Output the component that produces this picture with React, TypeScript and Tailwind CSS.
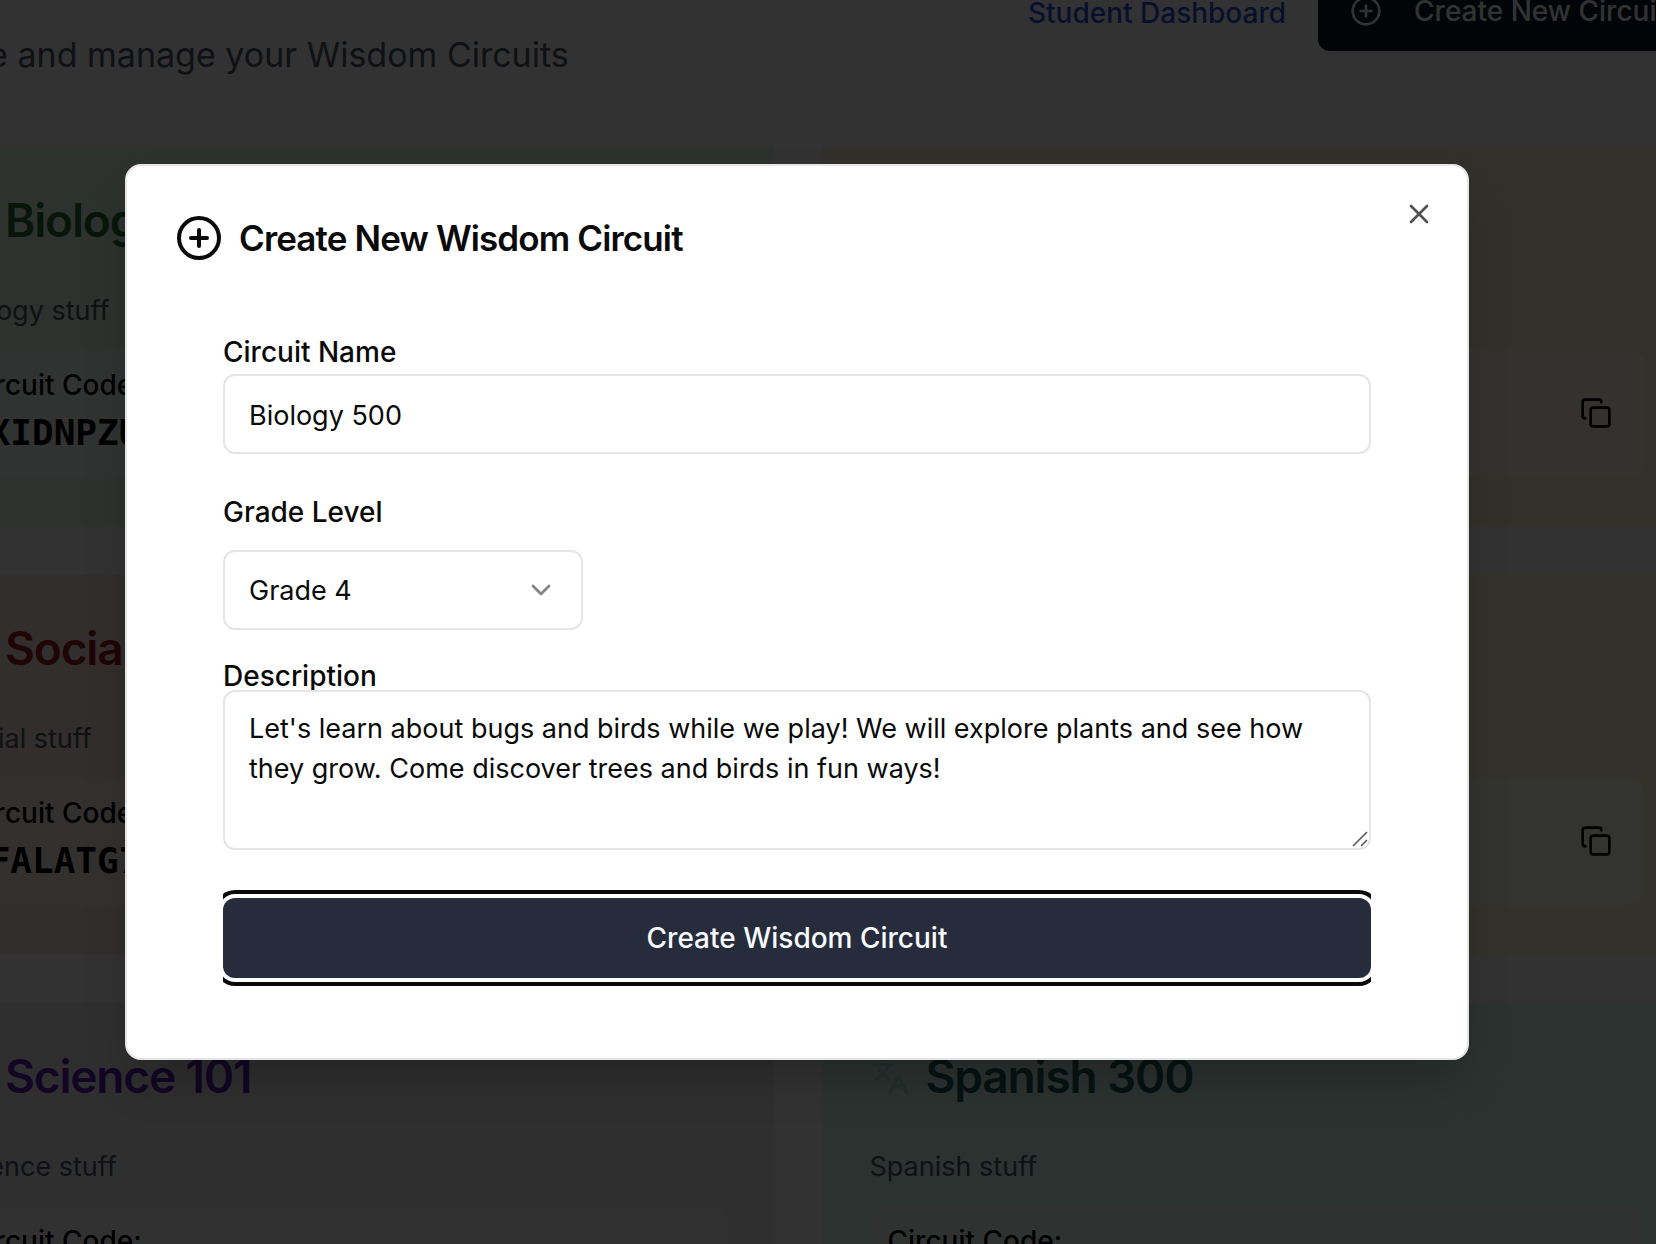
import { useState } from "react";
import { ChevronDown, CirclePlus, Copy, Globe, Languages, X } from "lucide-react";
import type { LucideIcon } from "lucide-react";

type Circuit = {
  name: string;
  description: string;
  code: string;
  card: string;
  title: string;
  iconColor: string;
  icon: LucideIcon;
};

const circuits: Circuit[] = [
  {
    name: "Biology 101",
    description: "Biology stuff",
    code: "AXIDNPZU",
    card: "bg-[#e3fbe9]",
    title: "text-[#2a6a38]",
    iconColor: "text-green-300",
    icon: Globe,
  },
  {
    name: "History 200",
    description: "History stuff",
    code: "BQLTRWNE",
    card: "bg-[#faf0d4]",
    title: "text-amber-800",
    iconColor: "text-amber-200",
    icon: Globe,
  },
  {
    name: "Social Studies",
    description: "Social stuff",
    code: "AFALATG7",
    card: "bg-[#f9e5de]",
    title: "text-[#991b1b]",
    iconColor: "text-red-200",
    icon: Globe,
  },
  {
    name: "Math 101",
    description: "Math stuff",
    code: "CMRTYUIO",
    card: "bg-[#fafad2]",
    title: "text-yellow-800",
    iconColor: "text-yellow-200",
    icon: Globe,
  },
  {
    name: "Science 101",
    description: "Science stuff",
    code: "DKWPLXNV",
    card: "bg-[#ebebf0]",
    title: "text-[#5b21b6]",
    iconColor: "text-violet-200",
    icon: Globe,
  },
  {
    name: "Spanish 300",
    description: "Spanish stuff",
    code: "ESPQRTUV",
    card: "bg-[#dbf7f0]",
    title: "text-[#1f5f59]",
    iconColor: "text-[#b3e6dc]",
    icon: Languages,
  },
];

function CircuitCard({ circuit }: { circuit: Circuit }) {
  const Icon = circuit.icon;
  return (
    <article className={`flex flex-col p-12 ${circuit.card}`}>
      <div className="mb-[46px] flex h-[50px] items-center gap-4">
        <Icon className={`size-10 ${circuit.iconColor}`} aria-hidden="true" />
        <h2 className={`text-[46px] leading-[50px] font-semibold tracking-tight ${circuit.title}`}>
          {circuit.name}
        </h2>
      </div>
      <p className="mb-4 text-[27px] leading-10 text-gray-600">{circuit.description}</p>
      <div className="flex items-center justify-between rounded-2xl border-2 border-transparent bg-white/50 bg-clip-padding p-4">
        <div>
          <p className="text-[28px] leading-10 font-medium text-black">Circuit Code:</p>
          <p className="font-['DejaVu_Sans_Mono',monospace] text-[36px] leading-[56px] font-bold text-black">
            {circuit.code}
          </p>
        </div>
        <button type="button" aria-label={`Copy code for ${circuit.name}`} className="p-4 text-black">
          <Copy className="size-8" />
        </button>
      </div>
    </article>
  );
}

function CreateCircuitDialog() {
  const [name, setName] = useState("Biology 500");
  const [grade, setGrade] = useState("Grade 4");
  const [description, setDescription] = useState(
    "Let's learn about bugs and birds while we play! We will explore plants and see how they grow. Come discover trees and birds in fun ways!",
  );

  return (
    <div
      role="dialog"
      aria-modal="true"
      aria-labelledby="dialog-title"
      className="relative w-full max-w-[1344px] rounded-2xl border-2 border-neutral-200 bg-white p-12 pb-20 text-neutral-950 shadow-2xl"
    >
      <button
        type="button"
        aria-label="Close"
        className="absolute top-8 right-8 text-neutral-950 opacity-70"
      >
        <X className="size-8" />
      </button>
      <h2
        id="dialog-title"
        className="flex items-center gap-4 text-[35px] leading-[48px] font-semibold tracking-tight"
      >
        <CirclePlus className="size-12" aria-hidden="true" />
        Create New Wisdom Circuit
      </h2>
      <form
        className="mx-12 mt-[76px] flex flex-col overflow-x-clip text-[28px]"
        onSubmit={(event) => event.preventDefault()}
      >
        <label htmlFor="circuit-name" className="mb-2 leading-7 font-medium">
          Circuit Name
        </label>
        <input
          id="circuit-name"
          type="text"
          value={name}
          onChange={(event) => setName(event.target.value)}
          className="mb-11 h-20 w-full rounded-xl border-2 border-neutral-200 bg-white px-6 pt-0.5 text-[27px] outline-none"
        />
        <label htmlFor="grade-level" className="mb-6 leading-7 font-medium">
          Grade Level
        </label>
        <div className="relative mb-8 w-[360px] max-w-full">
          <select
            id="grade-level"
            value={grade}
            onChange={(event) => setGrade(event.target.value)}
            className="h-20 w-full appearance-none rounded-xl border-2 border-neutral-200 bg-white px-6 pt-0.5 text-[27px] outline-none"
          >
            <option>Grade 3</option>
            <option>Grade 4</option>
            <option>Grade 5</option>
          </select>
          <ChevronDown
            className="pointer-events-none absolute top-6 right-[26px] size-8 opacity-50"
            aria-hidden="true"
          />
        </div>
        <label htmlFor="description" className="leading-7 font-medium">
          Description
        </label>
        <div className="relative mb-12">
          <textarea
            id="description"
            value={description}
            onChange={(event) => setDescription(event.target.value)}
            className="block h-40 w-full resize-y overflow-hidden rounded-xl border-2 border-neutral-200 bg-white px-6 pt-[17px] pb-4 text-[27px] leading-10 outline-none [&::-webkit-resizer]:bg-transparent"
          />
          <svg
            viewBox="0 0 16 16"
            className="pointer-events-none absolute right-[3px] bottom-[3px] size-4 text-neutral-600"
            fill="none"
            stroke="currentColor"
            strokeWidth="1.5"
            aria-hidden="true"
          >
            <path d="M1 15 15 1M9 15l6-6" />
          </svg>
        </div>
        <button
          type="submit"
          className="h-20 w-full rounded-xl bg-[#272c3d] font-medium text-slate-50 ring-4 ring-neutral-950 ring-offset-4 ring-offset-white outline-none"
        >
          Create Wisdom Circuit
        </button>
      </form>
    </div>
  );
}

export default function App() {
  return (
    <div className="relative h-screen overflow-hidden bg-[#fafafa] font-['Inter',sans-serif]">
      <main className="-mt-[61px] -mr-[38px] -ml-[99px]">
        <header className="mb-16 flex items-center justify-between">
          <div>
            <h1 className="mb-7 text-[60px] leading-[60px] font-bold text-gray-900">Teacher Studio</h1>
            <p className="text-[34px] leading-[56px] text-gray-600">Create and manage your Wisdom Circuits</p>
          </div>
          <div className="flex items-center gap-8">
            <a href="#student" className="pt-1 text-[28px] leading-10 font-medium text-[#2b50e0]">
              Student Dashboard
            </a>
            <button
              type="button"
              className="flex h-20 items-center gap-8 rounded-xl bg-slate-900 pr-7 pl-8 text-[28px] font-medium text-slate-50"
            >
              <CirclePlus className="size-8" aria-hidden="true" />
              Create New Circuit
            </button>
          </div>
        </header>
        <section className="grid grid-cols-2 gap-12">
          {circuits.map((circuit) => (
            <CircuitCard key={circuit.name} circuit={circuit} />
          ))}
        </section>
      </main>
      <div className="absolute inset-0 flex items-center justify-center bg-black/80 pr-[62px] pb-5">
        <CreateCircuitDialog />
      </div>
    </div>
  );
}
